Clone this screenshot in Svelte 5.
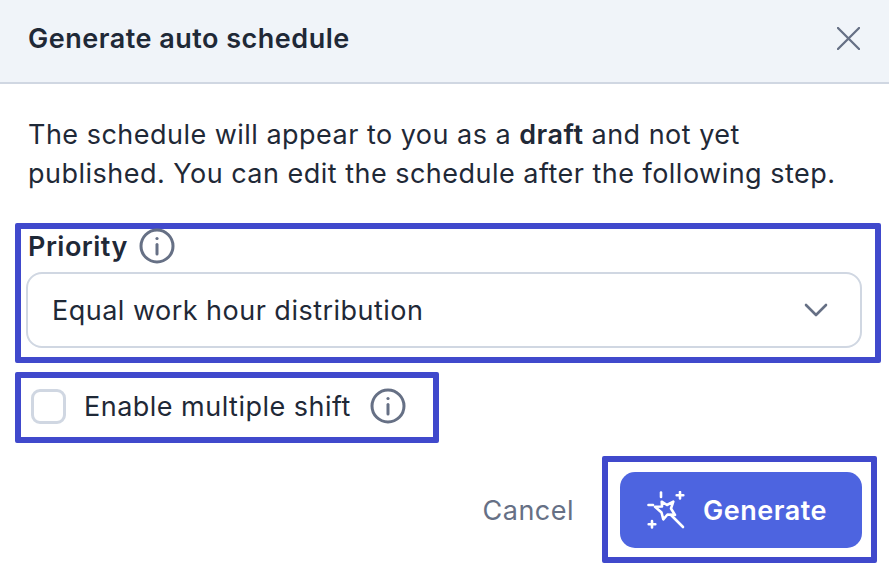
<script>
  const title = 'Generate auto schedule';
</script>

<div class="dialog">
  <header class="head">
    <h2>{title}</h2>
    <svg class="close" viewBox="0 0 24 24" fill="none" stroke="#667085" stroke-width="2.4" stroke-linecap="round"><path d="M1 1 L23 23 M23 1 L1 23"/></svg>
  </header>
  <p class="intro">The schedule will appear to you as a <b>draft</b> and not yet published. You can edit the schedule after the following step.</p>

  <section class="mark priority">
    <div class="label">
      <span>Priority</span>
      <svg class="info" viewBox="0 0 36 36" fill="none" stroke="#667085" stroke-width="3"><circle cx="18" cy="18" r="16"/><path d="M18 16.5V26" stroke-linecap="round"/><circle cx="18" cy="10.5" r="1.6" fill="#667085" stroke="none"/></svg>
    </div>
    <div class="select">
      <span>Equal work hour distribution</span>
      <svg class="chev" viewBox="0 0 24 14" fill="none" stroke="#667085" stroke-width="2.6" stroke-linecap="round" stroke-linejoin="round"><path d="M2 2 L12 12 L22 2"/></svg>
    </div>
  </section>

  <section class="mark multi">
    <span class="check"></span>
    <span class="multi-text">Enable multiple shift</span>
    <svg class="info" viewBox="0 0 36 36" fill="none" stroke="#667085" stroke-width="3"><circle cx="18" cy="18" r="16"/><path d="M18 16.5V26" stroke-linecap="round"/><circle cx="18" cy="10.5" r="1.6" fill="#667085" stroke="none"/></svg>
  </section>

  <footer class="foot">
    <span class="cancel">Cancel</span>
    <div class="mark gen">
      <div class="btn">
        <svg class="wand" viewBox="0 0 38 38" fill="none" stroke="#fff" stroke-width="2.6" stroke-linecap="round" stroke-linejoin="round">
          <path d="M14.7 10.7 L20 14 L26.3 10.7 L24 17.5 L28 24 L20.5 23.5 L16.3 28.3 L14.5 21.5 L8 15.7 L15 15.5 Z"/>
          <path d="M24 24 L36 36"/>
          <path d="M14 1.5 V6"/>
          <path d="M1.5 14 H6"/>
          <path d="M33 1 V7.5 M29.7 4.2 H36.3"/>
          <path d="M5 30 V36.5 M1.7 33.2 H8.3"/>
        </svg>
        <span>Generate</span>
      </div>
    </div>
  </footer>
</div>

<style>
  :global(body) { margin: 0; background: #fff; }
  .dialog {
    width: 889px;
    height: 584px;
    overflow: hidden;
    font-family: Inter, "Liberation Sans", sans-serif;
    font-size: 27px;
    letter-spacing: 0.48px;
    color: #1f2937;
    background: #fff;
    box-sizing: border-box;
  }
  .head {
    height: 84px;
    box-sizing: border-box;
    background: #f0f4f9;
    border-bottom: 2px solid #d0d7e2;
    display: flex;
    align-items: center;
    justify-content: space-between;
    padding: 0 29px 5px 28px;
  }
  h2 { margin: 0; font-size: 27px; font-weight: 600; line-height: 36px; letter-spacing: 0.5px; }
  .close { width: 23px; height: 23px; }
  .intro {
    margin: 31px 28px 0 28px;
    line-height: 39px;
    height: 78px;
  }
  .intro b { font-weight: 600; }
  .mark { border: 6px solid #4049cc; border-radius: 2px; box-sizing: border-box; background: #fff; }
  .priority {
    margin: 30px 0 0 15px;
    width: 866px;
    height: 140px;
    padding: 0 13px 0 5px;
  }
  .label {
    display: flex;
    align-items: center;
    gap: 11px;
    height: 34px;
    padding-left: 2px;
    font-weight: 600;
  }
  .info { width: 36px; height: 36px; flex: none; }
  .select {
    margin-top: 9px;
    height: 76px;
    box-sizing: border-box;
    border: 2px solid #d0d7e2;
    border-radius: 16px;
    display: flex;
    align-items: center;
    justify-content: space-between;
    padding: 0 32px 0 24px;
  }
  .chev { width: 24px; height: 14px; }
  .multi {
    margin: 9px 0 0 15px;
    width: 424px;
    height: 71px;
    display: flex;
    align-items: center;
    padding: 0 0 3px 10px;
  }
  .check {
    width: 35px;
    height: 35px;
    box-sizing: border-box;
    border: 3px solid #d0d7e2;
    border-radius: 9px;
    flex: none;
  }
  .multi-text { margin-left: 18px; margin-right: 19px; }
  .foot {
    margin: 13px 12px 0 0;
    display: flex;
    justify-content: flex-end;
    align-items: center;
  }
  .cancel { color: #667085; margin-right: 28px; padding-top: 1px; }
  .gen {
    width: 275px;
    height: 107px;
    padding: 10px 9px 0 12px;
  }
  .btn {
    height: 76px;
    border-radius: 15px;
    background: #4d64e0;
    color: #fff;
    display: flex;
    align-items: center;
    padding-left: 27px;
    gap: 18px;
    font-weight: 600;
    letter-spacing: 0.5px;
  }
  .wand { width: 38px; height: 38px; flex: none; }
</style>
